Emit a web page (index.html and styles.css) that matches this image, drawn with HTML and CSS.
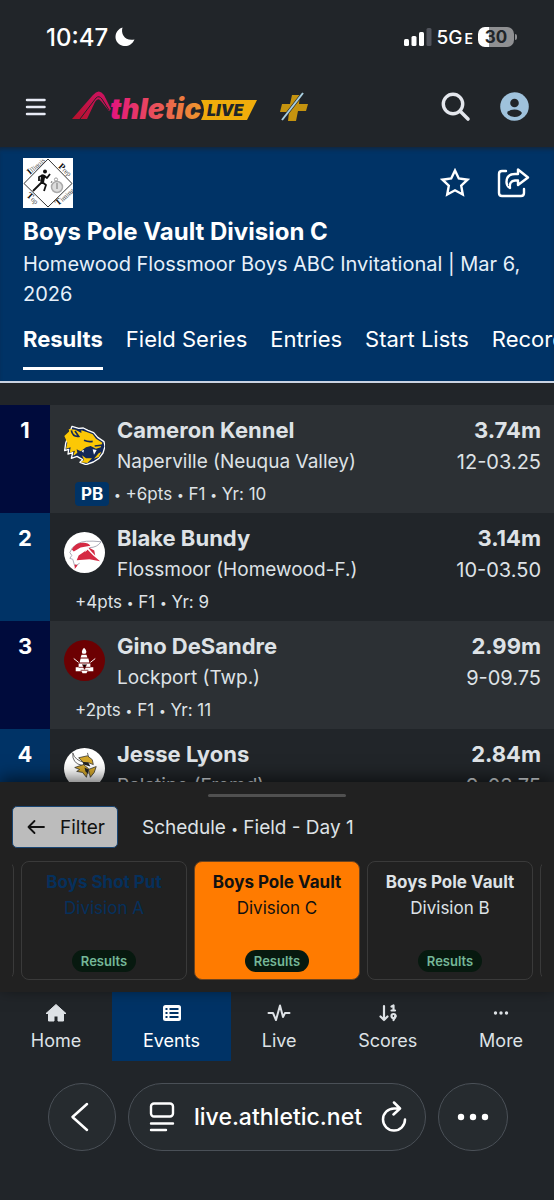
FILE: index.html
```html
<!DOCTYPE html>
<html lang="en">
<head>
<meta charset="utf-8">
<meta name="viewport" content="width=device-width, initial-scale=1">
<title>Boys Pole Vault Division C</title>
<link rel="stylesheet" href="styles.css">
</head>
<body>
<div class="status">
  <div class="status-group">
    <span class="clock">10:47</span>
    <svg width="20" height="20" viewBox="0 0 20 20"><path fill="#fff" d="M7.500.5C5.500 7 10 14.500 19.500 12.500 17 18 12 20 7.500 18.700 2 17 0 12.500.6 8.500 1.200 4.500 4 1.500 7.500.5z"/></svg>
  </div>
  <div class="status-group signal">
    <svg width="28" height="18" viewBox="0 0 28 18"><g fill="#fff"><rect x="0" y="11" width="5" height="7" rx="1.500"/><rect x="7.500" y="8" width="5" height="10" rx="1.500"/><rect x="15" y="4" width="5" height="14" rx="1.500"/></g><rect x="22.500" y="0" width="5" height="18" rx="1.500" fill="#50535b"/></svg>
    <span class="network">5G<small>E</small></span>
    <span class="battery">30</span>
  </div>
</div>

<header class="topbar">
  <button class="icon-btn" aria-label="Menu"><svg width="22" height="18" viewBox="0 0 22 18"><path stroke="#e8ebf5" stroke-width="2.500" stroke-linecap="round" d="M2 2h17.500M2 9h17.500M2 16h17.500"/></svg></button>
  <a href="#" class="brand" aria-label="Athletic Live">
    <svg width="188" height="38" viewBox="0 -2 188 38">
      <defs>
        <linearGradient id="word" gradientUnits="userSpaceOnUse" x1="38" y1="0" x2="130" y2="0"><stop offset="0" stop-color="#e3127f"/><stop offset=".5" stop-color="#e9515a"/><stop offset="1" stop-color="#ef9a2a"/></linearGradient>
        <linearGradient id="peak" x1="0" y1="1" x2="1" y2="0"><stop offset="0" stop-color="#b5122b"/><stop offset="1" stop-color="#cf1267"/></linearGradient>
      </defs>
      <path fill="url(#peak)" d="M0 29 21 5q6-7 11 0l7 14-2 2-8-10q-3-4-6 1L15 29z"/>
      <path fill="none" stroke="#212529" stroke-width="1" d="M8 29 24 8q3-3 6 1l7 11"/>
      <path fill="#f0ac0b" d="M129 10h56l-10 20h-46q6-10 0-20z"/>
      <text x="38" y="29" class="wordmark" fill="url(#word)">thletic</text>
      <text x="135" y="26" class="livemark">LIVE</text>
    </svg>
    <svg width="28" height="30" viewBox="0 0 28 30"><path fill="#c4930f" d="M12 3h8l-1 9h9l-2 7h-8l-2 10H8l1-9H0l2-8h8z"/><path stroke="#212529" stroke-width="3" d="M2 28 23 1"/><path stroke="#a9cfe0" stroke-width="2" d="M2 28 23 1"/></svg>
  </a>
  <button class="icon-btn" aria-label="Search"><svg width="30" height="30" viewBox="0 0 30 30"><circle cx="12" cy="12" r="9.700" fill="none" stroke="#e4e7ed" stroke-width="3.400"/><path stroke="#e4e7ed" stroke-width="3.600" stroke-linecap="round" d="m19 19 8 8"/></svg></button>
  <button class="icon-btn" aria-label="Account"><svg width="29" height="29" viewBox="0 0 29 29"><circle cx="14.500" cy="14.500" r="14.300" fill="#9fc2dc"/><circle cx="14.500" cy="11" r="4.300" fill="#212529"/><path fill="#212529" d="M7 21q2-3.500 7.500-3.500T22 21q-2 4-7.500 4T7 21z"/></svg></button>
</header>

<main class="main">
  <section class="event">
    <div class="event-tools">
      <svg class="event-logo" viewBox="0 0 50 50">
        <path fill="#fff" d="M0 0h50v50H0z"/>
        <path fill="none" stroke="#333" stroke-width="1" d="m25 1 24 24.500L25 49 1 25.500z"/>
        <g class="logo-text"><text transform="translate(7 17) rotate(-42)"><tspan class="cap">I</tspan>llinois</text><text transform="translate(35 9) rotate(42)"><tspan class="cap">P</tspan>rep</text><text transform="translate(3 38) rotate(42)"><tspan class="cap">T</tspan>op</text><text transform="translate(35 48) rotate(-42)"><tspan class="cap">T</tspan>iming</text></g>
        <circle cx="22" cy="13.500" r="2" fill="#111"/>
        <path fill="none" stroke="#111" stroke-width="1.800" stroke-linejoin="round" d="m20 17-4 2 0 4M20 17l4 3 3-4M20 17l-1 7 4 3-2 6M19 24l-4 4-5 5"/>
        <path stroke="#111" stroke-width="4" d="m20.500 17-1.500 7"/>
        <circle cx="34" cy="29" r="5.500" fill="#ddd" stroke="#aaa" stroke-width="1.500"/><circle cx="33" cy="21.500" r="1.600" fill="none" stroke="#999"/><path stroke="#777" d="M34 25v6M29 23l-1 2"/>
      </svg>
      <button class="icon-btn" aria-label="Favorite"><svg width="30" height="30" viewBox="0 0 30 30"><path fill="none" stroke="#fff" stroke-width="2.400" d="m15 2.500 3.800 8 8.700 1.200-6.300 6 1.600 8.800L15 22.300 7.200 26.500l1.600-8.800-6.300-6 8.700-1.200z"/></svg></button>
      <button class="icon-btn" aria-label="Share"><svg width="34" height="32" viewBox="0 0 34 32"><g fill="none" stroke="#fff" stroke-width="2.400" stroke-linecap="round" stroke-linejoin="round"><path d="M10 4H6Q3 4 3 7v19q0 3 3 3h19q3 0 3-3v-4"/><path d="M22 2.500V7h-3q-8.500 0-8.500 8 0 4 3.500 6-1-7 5-7.500h3V18l10-7.500z"/></g></svg></button>
    </div>
    <h1>Boys Pole Vault Division C</h1>
    <p class="meet">Homewood Flossmoor Boys ABC Invitational | Mar 6, 2026</p>
    <nav class="tabs">
      <a href="#" class="current">Results</a><a href="#">Field Series</a><a href="#">Entries</a><a href="#">Start Lists</a><a href="#">Records</a>
    </nav>
  </section>

  <ol class="results">
    <li class="row">
      <span class="rank">1</span>
      <div class="entry">
        <div class="line">
          <svg class="team" viewBox="12 24 123 123"><path fill="#152956" stroke="#fff" stroke-width="4" stroke-linejoin="round" d="m36 31 20 6 14-1 14 7 17 7 12 14 19 13 3 14-6 20-12 16-17 11-22 8-18-7 8-8-17-10-17 6 4-17-14 4 2-14-12 4 3-22z"/><path fill="#fcc805" d="m13 60 15-14-2-7 20 2 18 10 0-8 18 6 16 6 10 13 19 12-5 14-14 4-16-8-14 4-16 12-12-6 2 10-9 8-3 0 5-14-16 6 3-16-14 4 4-18z"/><path fill="#fcc805" d="m66 118 12 9 18 0-14 14-20-2 10-7zM102 128l14-16 8-4-8 15z"/><path stroke="#152956" stroke-width="5" fill="none" d="M34 43q4 20 22 18L45 45M72 73q14 6 26 3M104 90l26-3"/><path fill="#152956" d="m60 111 20-12 22 2 10 7-14 14-20 0z"/><path fill="#fff" d="m98 100 12 2-8 14zM64 104l8-2-2 8z"/></svg>
          <div class="who"><h2>Cameron Kennel</h2><p>Naperville (Neuqua Valley)</p></div>
          <div class="mark"><strong>3.74m</strong><span>12-03.25</span></div>
        </div>
        <p class="meta"><span class="pb">PB</span> <i>•</i> +6pts <i>•</i> F1 <i>•</i> Yr: 10</p>
      </div>
    </li>
    <li class="row">
      <span class="rank">2</span>
      <div class="entry">
        <div class="line">
          <svg class="team" viewBox="0 0 42 42"><circle cx="21" cy="21" r="21" fill="#fff"/><path fill="none" stroke="#a9a9b5" stroke-width="1" d="M38 10Q20 8 14 12q-7 4-8 9l2 3-2 3 3 1 2 7 5-3M26 16q8 0 12-6"/><path fill="#d52a43" d="M8 18q4-8 12-7 5 0 7 3l-10 2-7 4zM15 24l9-6 6 6 7 6-11-2-13 1zM24 15l7 4 1 5-4-4zM11 33l3 1-3 4z"/><path stroke="#fff" fill="none" d="m26 15-4 5"/></svg>
          <div class="who"><h2>Blake Bundy</h2><p>Flossmoor (Homewood-F.)</p></div>
          <div class="mark"><strong>3.14m</strong><span>10-03.50</span></div>
        </div>
        <p class="meta">+4pts <i>•</i> F1 <i>•</i> Yr: 9</p>
      </div>
    </li>
    <li class="row">
      <span class="rank">3</span>
      <div class="entry">
        <div class="line">
          <svg class="team" viewBox="0 0 42 42"><circle cx="21" cy="21" r="21" fill="#6c0002"/><path fill="#fff" d="M20.500 8q4 4 1.500 6h-3q-2-2 1.500-6zM18 15h5l1 3h-7zM17 19h8l1 4H16zM15 24h12l0 4h3l0 4h-6l-1 2h-4l-1-2h-6l0-4h3z"/><path stroke="#fff" d="m10 19 5 4M32 19l-5 4"/><path stroke="#6c0002" stroke-width=".8" d="M15 28h12M19 25l2 5 2-5M17 31h8"/></svg>
          <div class="who"><h2>Gino DeSandre</h2><p>Lockport (Twp.)</p></div>
          <div class="mark"><strong>2.99m</strong><span>9-09.75</span></div>
        </div>
        <p class="meta">+2pts <i>•</i> F1 <i>•</i> Yr: 11</p>
      </div>
    </li>
    <li class="row">
      <span class="rank">4</span>
      <div class="entry">
        <div class="line">
          <svg class="team" viewBox="0 0 42 42"><circle cx="21" cy="21" r="21" fill="#fff"/><path fill="#fff" stroke="#666" stroke-width="1" d="M9 5q-1 11 10 13l3-3Q11 13 9 5zM24 5l2 7"/><path fill="#d2a62b" stroke="#333" stroke-width=".8" d="m15 10 9-2 5 4 1 5-5-2-5 0zM11 20l9-3 5 4-2 9-4-5-6-1 3-2zM25 22l8-3-2 6-4 5-1-4z"/><path fill="#222" d="m19 14 6 1 2 4-7-2zM21 20l4 2 0 5-3-3z"/></svg>
          <div class="who"><h2>Jesse Lyons</h2><p>Palatine (Fremd)</p></div>
          <div class="mark"><strong>2.84m</strong><span>9-03.75</span></div>
        </div>
      </div>
    </li>
  </ol>
</main>

<section class="drawer">
  <div class="handle"></div>
  <div class="drawer-head">
    <button class="filter"><svg width="18" height="18" viewBox="0 0 18 18"><path fill="none" stroke="#111" stroke-width="1.800" stroke-linecap="round" stroke-linejoin="round" d="M17 9H1.500M7.500 3l-6 6 6 6"/></svg>Filter</button>
    <span>Schedule <i>•</i> Field - Day 1</span>
  </div>
  <div class="cards">
    <div class="card"></div>
    <a href="#" class="card past"><b>Boys Shot Put</b><span>Division A</span><em>Results</em></a>
    <a href="#" class="card active"><b>Boys Pole Vault</b><span>Division C</span><em>Results</em></a>
    <a href="#" class="card"><b>Boys Pole Vault</b><span>Division B</span><em>Results</em></a>
    <div class="card"></div>
  </div>
</section>

<nav class="bottom">
  <a href="#"><svg width="22" height="20" viewBox="0 0 22 20"><path fill="#dee2e6" stroke="#dee2e6" stroke-linejoin="round" d="M11 1.500 21 10.500h-2.500V18H13v-5H9v5H3.500v-7.500H1z"/></svg>Home</a>
  <a href="#" class="on"><svg width="22" height="20" viewBox="0 0 22 20"><rect x="2" y="2" width="18" height="16" rx="2.500" fill="#fff"/><path fill="#036" d="M4.500 5h2v2h-2zM8.500 5h9v2h-9zM4.500 9h2v2h-2zM8.500 9h9v2h-9zM4.500 13h2v2h-2zM8.500 13h9v2h-9z"/></svg>Events</a>
  <a href="#"><svg width="24" height="20" viewBox="0 0 24 20"><path fill="none" stroke="#dee2e6" stroke-width="2" stroke-linecap="round" stroke-linejoin="round" d="M1.500 10H6l3 7 4-14.500L16 14l2-4h4.500"/></svg>Live</a>
  <a href="#"><svg width="20" height="20" viewBox="0 0 20 20"><g fill="none" stroke="#dee2e6" stroke-width="2.200" stroke-linecap="round" stroke-linejoin="round"><path d="M6 3v14M2.500 13.500 6 17l3.500-3.500M13.500 3.500l2-1V7M13.500 7.500H17"/><circle cx="15.500" cy="13" r="2"/><path d="m17.500 13-2 4"/></g></svg>Scores</a>
  <a href="#"><svg width="20" height="20" viewBox="0 0 20 20"><g fill="#dee2e6"><circle cx="4.500" cy="10" r="1.700"/><circle cx="10" cy="10" r="1.700"/><circle cx="15.500" cy="10" r="1.700"/></g></svg>More</a>
</nav>

<footer class="browser">
  <button class="round" aria-label="Back"><svg width="20" height="32" viewBox="0 0 20 32"><path fill="none" stroke="#fff" stroke-width="2.500" stroke-linecap="round" stroke-linejoin="round" d="M17 3 2.500 16 17 29"/></svg></button>
  <div class="address">
    <svg width="26" height="30" viewBox="0 0 26 30"><g fill="none" stroke="#fff" stroke-width="2.400" stroke-linecap="round"><rect x="2" y="1.500" width="22" height="13" rx="3"/><path d="M2 21.500h22M2 28h15"/></g></svg>
    <a href="#">live.athletic.net</a>
    <button class="icon-btn" aria-label="Reload"><svg width="26" height="32" viewBox="0 0 26 32"><path fill="none" stroke="#fff" stroke-width="2.500" stroke-linecap="round" stroke-linejoin="round" d="M24 18.500A11 11 0 1 1 13 7.500h5M13 1.500l6 6-6.500 6"/></svg></button>
  </div>
  <button class="round more" aria-label="More options"><svg width="32" height="8" viewBox="0 0 32 8"><g fill="#fff"><circle cx="4" cy="4" r="3.200"/><circle cx="16" cy="4" r="3.200"/><circle cx="28" cy="4" r="3.200"/></g></svg></button>
</footer>
</body>
</html>
```
FILE: styles.css
```css
* { box-sizing: border-box; }
body {
  margin: 0;
  height: 100vh;
  display: flex;
  flex-direction: column;
  overflow: hidden;
  background: #212529;
  color: #dee2e6;
  font-family: Inter, "Liberation Sans", sans-serif;
  font-size: 20px;
}
h1, h2, p { margin: 0; }
a { color: inherit; text-decoration: none; }
svg { display: block; flex: none; }
button { font: inherit; cursor: pointer; }
.icon-btn { padding: 0; border: 0; background: none; }

.status {
  display: flex;
  justify-content: space-between;
  align-items: center;
  height: 74px;
  padding: 0 40px 0 46px;
  color: #fff;
}
.status-group { display: flex; align-items: center; gap: 7px; }
.signal { gap: 5px; }
.clock { font-size: 24px; font-weight: 500; }
.network { font-size: 19px; font-weight: 500; }
.network small { font-size: 14px; font-weight: 600; margin-left: 2px; }
.battery {
  position: relative;
  width: 36px;
  line-height: 20px;
  border-radius: 7px;
  background: linear-gradient(90deg, #fff 11px, #8f9092 11px);
  color: #212529;
  font-size: 17px;
  font-weight: 700;
  text-align: center;
}
.battery::after {
  content: "";
  position: absolute;
  left: 37px;
  top: 7px;
  width: 2px;
  height: 6px;
  border-radius: 0 2px 2px 0;
  background: #8f9092;
}

.topbar {
  display: flex;
  align-items: center;
  height: 73px;
  padding: 0 25px 8px;
  gap: 29px;
}
.brand { display: flex; align-items: center; gap: 20px; margin-right: auto; margin-left: -4px; }
.wordmark { font: italic 900 28px Inter, sans-serif; }
.livemark { font: italic 900 16px Inter, sans-serif; fill: #212529; }

.main { flex: 1; min-height: 0; overflow: hidden; }
.event {
  padding: 11px 0 11px 23px;
  background: #003366;
  border-bottom: 2px solid #c9d3e2;
  color: #fff;
  box-shadow: inset 0 4px 4px -2px #12263c;
}
.event-tools { display: flex; align-items: center; gap: 26px; padding-right: 24px; }
.event-logo { width: 50px; height: 50px; margin-right: auto; }
.logo-text { font: 7px "Liberation Serif", serif; fill: #444; }
.cap { font-size: 9px; font-weight: 700; fill: #111; }
h1 { margin-top: 8px; font-size: 24px; line-height: 32px; font-weight: 700; }
.meet { padding: 1px 23px 0 0; line-height: 30px; color: #e6f0fa; }
.tabs { display: flex; gap: 23px; margin-top: 14px; overflow: hidden; white-space: nowrap; font-size: 22px; line-height: 32px; }
.tabs a { padding-bottom: 12px; border-bottom: 3px solid transparent; }
.tabs .current { border-color: #fff; font-weight: 700; }

.results { margin: 22px 0 0; padding: 0; list-style: none; }
.row { display: grid; grid-template-columns: 50px 1fr; }
.row:nth-child(odd) { background: #2c3034; }
.rank {
  padding-top: 10px;
  background: #003366;
  color: #fff;
  font-size: 22px;
  line-height: 30px;
  font-weight: 700;
  text-align: center;
}
.row:nth-child(odd) .rank { background: #000b3c; }
.entry { padding: 10px 13px 4px 14px; }
.line { display: flex; gap: 12px; }
.team { width: 41px; height: 41px; margin-top: 9px; }
.who { flex: 1; }
h2, .mark strong { display: block; font-size: 22px; line-height: 30px; font-weight: 700; }
.who p, .mark span { display: block; font-size: 19px; line-height: 34px; }
.mark { text-align: right; }
.mark span { font-size: 20px; }
.meta { padding-left: 11px; font-size: 17px; line-height: 30px; }
i { font-size: 12px; font-style: normal; line-height: 1; vertical-align: 1px; }
.pb { display: inline-block; padding: 0 6px; border-radius: 4px; background: #003366; color: #fff; font-weight: 700; line-height: 24px; }

.drawer {
  position: relative;
  padding: 12px 12px 12px;
  background: #212121;
  box-shadow: 0 -4px 16px rgba(0, 0, 0, .6);
}
.handle { width: 25%; min-width: 138px; height: 3px; margin: 0 auto 9px; border-radius: 2px; background: #505050; }
.drawer-head { display: flex; align-items: center; gap: 24px; font-size: 19px; }
.filter {
  display: flex;
  align-items: center;
  gap: 15px;
  height: 42px;
  padding: 0 12px 0 14px;
  border: 1px solid #1a4674;
  border-radius: 5px;
  background: #bcbcbc;
  color: #111;
}
.cards { display: flex; justify-content: center; gap: 7px; margin-top: 13px; overflow: hidden; }
.card {
  flex: none;
  display: flex;
  flex-direction: column;
  align-items: center;
  width: 166px;
  height: 119px;
  padding: 7px 0;
  border: 1px solid #3a3a3a;
  border-radius: 8px;
  font-size: 17px;
  line-height: 26px;
}
.card em {
  margin-top: auto;
  padding: 0 9px;
  border-radius: 11px;
  background: #07190f;
  color: #75b798;
  font-size: 13px;
  font-style: normal;
  font-weight: 600;
  line-height: 22px;
}
.past { color: #06305c; }
.active { border-color: #6b4420; background: #ff7b00; color: #111; }

.bottom { display: flex; height: 69px; flex: none; font-size: 18px; }
.bottom a { flex: 1 1 auto; display: flex; flex-direction: column; align-items: center; gap: 4px; padding-top: 11px; line-height: 28px; }
.bottom .on { background: #003366; color: #fff; }

.browser { display: flex; justify-content: center; gap: 12px; padding: 22px 46px 49px 48px; }
.round, .address { height: 68px; border: 1px solid #4a5057; border-radius: 34px; background: #262b2f; color: #fff; }
.round { display: flex; align-items: center; justify-content: center; flex: none; width: 68px; padding: 0 4px 0 0; }
.more { width: 70px; padding: 0; }
.address { flex: 1; display: flex; align-items: center; justify-content: space-between; padding: 0 18px 0 20px; font-size: 23px; font-weight: 500; }
```
